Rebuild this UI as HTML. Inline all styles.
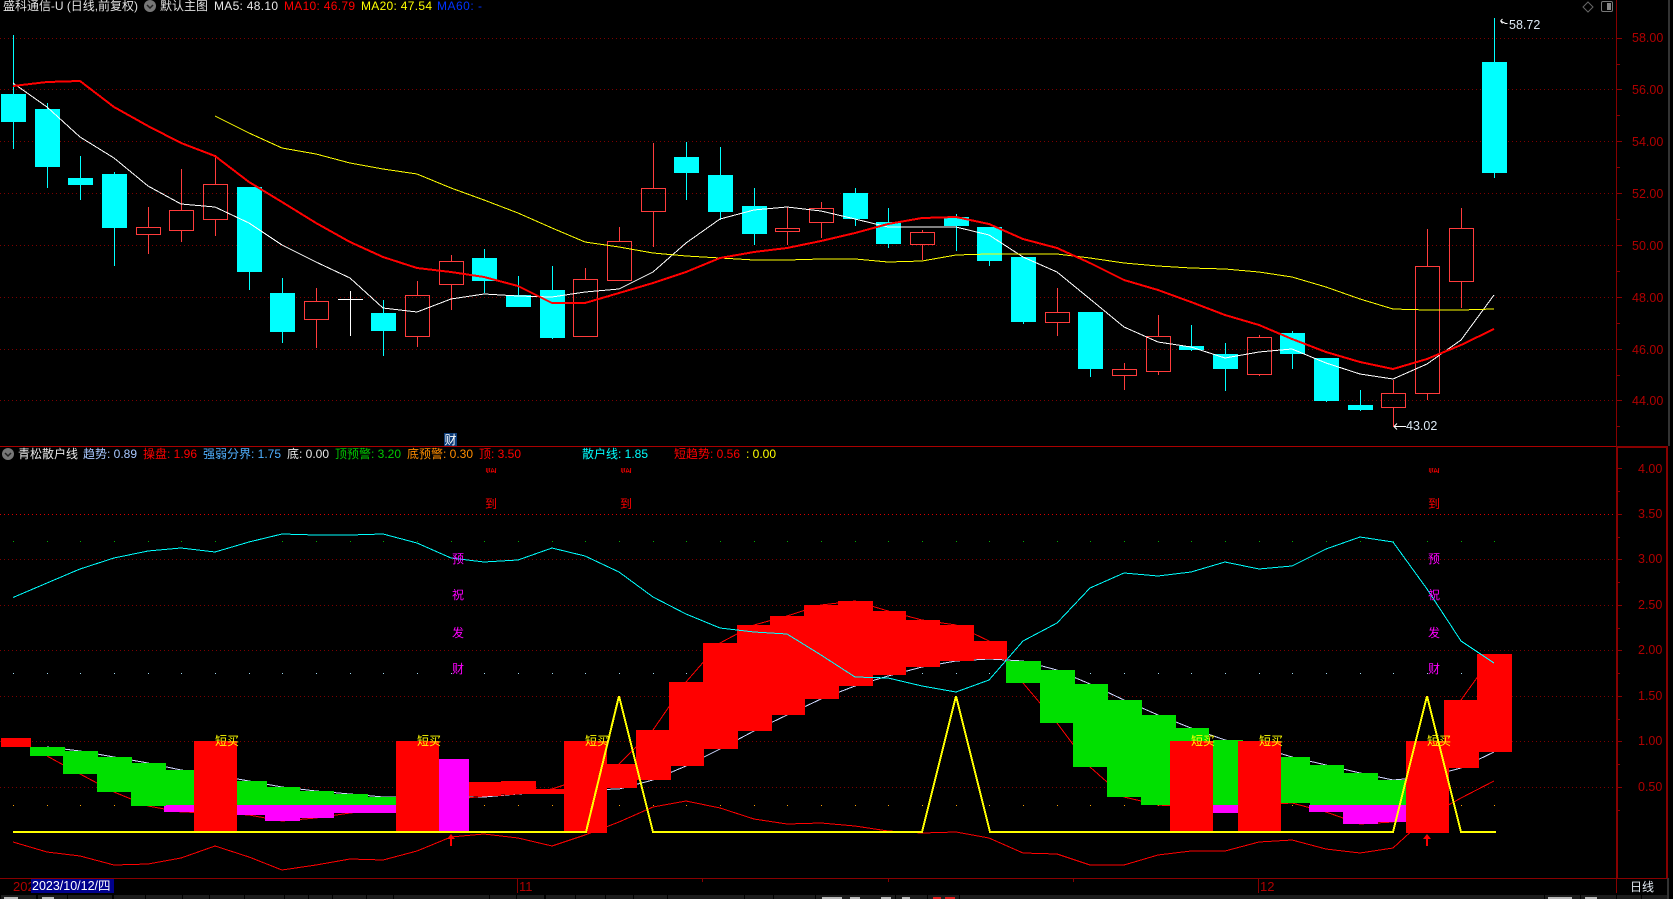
<!DOCTYPE html>
<html lang="zh"><head><meta charset="utf-8"><title>盛科通信-U 日线</title>
<style>
html,body{margin:0;padding:0;background:#000;width:1673px;height:899px;overflow:hidden}
svg{display:block;position:absolute;left:0;top:0}
text{font-family:"Liberation Sans","Noto Sans CJK SC",sans-serif;font-size:12px}
polyline{shape-rendering:crispEdges}
.ax{font-size:12.5px;fill:#b00000}
.m{fill:#ff00ff}
.r{fill:#ff0000}
.y{fill:#ffff00}
</style></head><body>
<svg width="1673" height="899" viewBox="0 0 1673 899" xmlns="http://www.w3.org/2000/svg">
<defs>
<path id="d" d="M13.5 0v1M47.5 0v1M80.5 0v1M114.5 0v1M148.5 0v1M181.5 0v1M215.5 0v1M249.5 0v1M282.5 0v1M316.5 0v1M350.5 0v1M383.5 0v1M417.5 0v1M451.5 0v1M484.5 0v1M518.5 0v1M552.5 0v1M585.5 0v1M619.5 0v1M653.5 0v1M686.5 0v1M720.5 0v1M754.5 0v1M787.5 0v1M821.5 0v1M855.5 0v1M888.5 0v1M922.5 0v1M956.5 0v1M989.5 0v1M1023.5 0v1M1057.5 0v1M1090.5 0v1M1124.5 0v1M1158.5 0v1M1191.5 0v1M1225.5 0v1M1259.5 0v1M1292.5 0v1M1326.5 0v1M1360.5 0v1M1393.5 0v1M1427.5 0v1M1461.5 0v1M1494.5 0v1"/>
<clipPath id="c1"><rect x="0" y="468" width="1600" height="5"/></clipPath>
</defs>

<!-- grid -->
<path shape-rendering="crispEdges" d="M0 38.5H1616M0 89.5H1616M0 141.5H1616M0 193.5H1616M0 245.5H1616M0 297.5H1616M0 349.5H1616M0 400.5H1616M0 559.5H1616M0 605.5H1616M0 650.5H1616M0 696.5H1616M0 741.5H1616M0 787.5H1616" stroke="#7c0000" stroke-width="1" stroke-dasharray="1 3" fill="none"/>
<path shape-rendering="crispEdges" d="M0 514.5H1616" stroke="#d80000" stroke-width="1" stroke-dasharray="1 3" fill="none"/>
<use href="#d" y="541" stroke="#00b000"/>
<use href="#d" y="673" stroke="#a0d8f0"/>
<use href="#d" y="805" stroke="#ffa000"/>

<!-- candles -->
<g shape-rendering="crispEdges">
<path fill="none" stroke="#00ffff" d="M13.5 35V149M47.5 103V188M80.5 156V200M114.5 172V266M249.5 187V290M282.5 278V343M383.5 300V356M484.5 249V293M518.5 276V307M552.5 266V339M686.5 142V200M720.5 147V220M754.5 188V245M855.5 188V226M888.5 208V248M956.5 214V251M989.5 227V266M1023.5 257V324M1090.5 312V377M1191.5 325V351M1225.5 343V391M1292.5 331V369M1326.5 358V402M1360.5 390V411M1494.5 18V178"/>
<path fill="#00ffff" d="M1 94h25V122H1zM35 109h25V167H35zM68 178h25V185H68zM102 174h25V228H102zM237 187h25V272H237zM270 293h25V332H270zM371 313h25V331H371zM472 258h25V281H472zM506 295h25V307H506zM540 290h25V338H540zM674 157h25V173H674zM708 175h25V212H708zM742 206h25V234H742zM843 193h25V219H843zM876 222h25V244H876zM944 217h25V226H944zM977 227h25V261H977zM1011 257h25V322H1011zM1078 312h25V369H1078zM1179 346h25V350H1179zM1213 354h25V369H1213zM1280 333h25V354H1280zM1314 358h25V401H1314zM1348 405h25V410H1348zM1482 62h25V173H1482z"/>
<path fill="none" stroke="#ff3c3c" d="M148.5 207V227M148.5 235V254M181.5 169V210M181.5 231V242M215.5 155V184M215.5 220V236M316.5 288V301M316.5 320V348M417.5 281V295M417.5 337V347M451.5 255V261M451.5 285V310M585.5 268V279M619.5 227V241M653.5 143V188M653.5 212V247M787.5 207V228M787.5 232V245M821.5 202V208M821.5 223V238M922.5 230V232M922.5 245V260M1057.5 288V312M1057.5 323V336M1124.5 363V369M1124.5 376V390M1158.5 315V336M1158.5 372V375M1259.5 335V337M1259.5 375V376M1393.5 380V393M1393.5 408V427M1427.5 229V266M1427.5 394V400M1461.5 208V228M1461.5 282V308"/>
<path fill="none" stroke="#ff3c3c" d="M136.5 227.5h24v7h-24zM169.5 210.5h24v20h-24zM203.5 184.5h24v35h-24zM304.5 301.5h24v18h-24zM405.5 295.5h24v41h-24zM439.5 261.5h24v23h-24zM573.5 279.5h24v57h-24zM607.5 241.5h24v39h-24zM641.5 188.5h24v23h-24zM775.5 228.5h24v3h-24zM809.5 208.5h24v14h-24zM910.5 232.5h24v12h-24zM1045.5 312.5h24v10h-24zM1112.5 369.5h24v6h-24zM1146.5 336.5h24v35h-24zM1247.5 337.5h24v37h-24zM1381.5 393.5h24v14h-24zM1415.5 266.5h24v127h-24zM1449.5 228.5h24v53h-24z"/>
<path fill="none" stroke="#ffffff" d="M350.5 291V336M338 299.5h25"/>
</g>

<!-- MAs -->
<polyline fill="none" stroke="#ffffff" stroke-width="1" points="13,83 47,107 80,137 114,158 148,186 181,204 215,207 249,223 282,245 316,262 350,278 383,308 417,312 451,299 484,294 518,296 552,297 585,292 619,289 653,272 686,243 720,219 754,210 787,207 821,211 855,219 888,227 922,227 956,227 989,235 1023,257 1057,272 1090,299 1124,327 1158,342 1191,347 1225,358 1259,352 1292,349 1326,363 1360,374 1393,379 1427,364 1461,340 1494,295"/>
<polyline fill="none" stroke="#ffff00" stroke-width="1" points="215,116 249,133 282,148 316,154 350,163 383,169 417,174 451,188 484,200 518,213 552,228 585,242 619,247 653,253 686,256 720,258 754,260 787,260 821,259 855,259 888,262 922,261 956,255 989,254 1023,254 1057,254 1090,258 1124,263 1158,266 1191,268 1225,269 1259,272 1292,277 1326,287 1360,299 1393,309 1427,310 1461,310 1494,309"/>
<polyline fill="none" stroke="#ff0000" stroke-width="2" points="13,86 47,82 80,81 114,107 148,126 181,143 215,156 249,182 282,202 316,223 350,242 383,257 417,268 451,272 484,277 518,286 552,303 585,303 619,293 653,283 686,272 720,258 754,252 787,248 821,241 855,233 888,224 922,218 956,217 989,224 1023,239 1057,248 1090,263 1124,280 1158,290 1191,302 1225,315 1259,325 1292,339 1326,352 1360,362 1393,369 1427,359 1461,345 1494,329"/>

<!-- lower lines below blocks -->
<polyline fill="none" stroke="#d0d8ff" stroke-width="1" points="47,747 80,751 114,757 148,763 181,770 215,775 249,781 282,787 316,791 350,794 383,797 417,797 451,797 484,797 518,794 552,792 585,790 619,789 653,780 686,766 720,749 754,731 787,715 821,699 855,686 888,676 922,667 956,661 989,659 1023,661 1057,670 1090,684 1124,700 1158,715 1191,728 1225,740 1259,747 1292,757 1326,765 1360,773 1393,780 1427,777 1461,768 1494,752"/>
<polyline fill="none" stroke="#ff0000" stroke-width="1" points="47,756 80,774 114,792 148,806 181,812 215,813 249,815 282,821 316,818 350,813 383,810 417,805 451,800 484,796 518,794 552,789 585,778 619,764 653,730 686,682 720,643 754,625 787,616 821,605 855,601 888,611 922,620 956,625 989,641 1023,683 1057,723 1090,767 1124,797 1158,805 1191,807 1225,806 1259,805 1292,803 1326,812 1360,824 1393,822 1427,790 1461,700 1494,654"/>
<polyline fill="none" stroke="#ff0000" stroke-width="1" points="13,842 47,852 80,856 114,865 148,864 181,858 215,846 249,857 282,870 316,865 350,859 383,860 417,851 451,837 484,834 518,838 552,846 585,835 619,822 653,807 686,801 720,808 754,819 787,824 821,823 855,826 888,831 922,833 956,832 989,838 1023,853 1057,854 1090,865 1124,865 1158,855 1191,851 1225,851 1259,842 1292,840 1326,849 1360,853 1393,848 1427,817 1461,798 1494,781"/>

<!-- blocks -->
<g shape-rendering="crispEdges">
<path fill="#ff00ff" d="M164 805h30v7h-30zM237 805h28v10h-28zM265 805h35v16h-35zM300 805h34v13h-34zM334 805h62v8h-62zM439 759h30v72h-30zM1213 805h25v8h-25zM1309 805h34v7h-34zM1343 805h35v19h-35zM1378 805h28v17h-28z"/>
<path fill="#00e000" d="M30 747h35v9h-35zM63 751h35v23h-35zM97 757h35v35h-35zM131 763h35v43h-35zM166 770h28v35h-28zM237 781h30v24h-30zM267 787h33v18h-33zM300 791h34v14h-34zM334 794h34v11h-34zM368 797h28v8h-28zM1006 661h35v22h-35zM1040 670h35v53h-35zM1073 684h35v83h-35zM1107 700h35v97h-35zM1141 715h35v90h-35zM1176 728h33v77h-33zM1213 740h30v65h-30zM1281 757h29v46h-29zM1310 765h34v40h-34zM1344 773h34v32h-34zM1378 780h28v25h-28z"/>
<path fill="#ff0000" d="M1 738h30v9H1zM194 741h43v90h-43zM396 741h43v90h-43zM469 782h32v14h-32zM501 781h35v13h-35zM536 789h28v5h-28zM564 741h43v92h-43zM607 764h30v24h-30zM636 730h35v50h-35zM669 682h35v84h-35zM703 643h35v106h-35zM737 625h35v106h-35zM770 616h35v99h-35zM804 605h35v94h-35zM838 601h35v85h-35zM873 611h33v64h-33zM906 620h34v47h-34zM940 625h34v36h-34zM974 641h33v18h-33zM1170 741h43v90h-43zM1238 741h43v90h-43zM1406 741h43v92h-43zM1444 700h35v68h-35zM1477 654h35v98h-35z"/>
</g>

<!-- cyan + yellow -->
<polyline fill="none" stroke="#00ffff" stroke-width="1" points="13,597.5 47,583 80,569 114,558 148,551 181,548 215,552 249,542 282,534 316,535 350,535 383,534 417,543 451,558 484,562 518,560 552,548 585,556 619,572 653,597 686,614 720,628 754,632 787,634 821,655 855,677 888,678 922,686 956,692 989,680 1023,641 1057,623 1090,588 1124,573 1158,576 1191,572 1225,562 1259,569 1292,566 1326,549 1360,537 1393,542 1427,589 1461,641 1494,663"/>
<polyline fill="none" stroke="#ffff00" stroke-width="2" points="13,832 586,832 619,696 653,832 922,832 956,696 990,832 1393,832 1427,696 1461,832 1496,832"/>

<!-- arrows -->
<path fill="#ff0000" d="M451 834l-4 5h3v7h2v-7h3zM1427 834l-4 5h3v7h2v-7h3z"/>

<!-- vertical characters -->
<g clip-path="url(#c1)"><text x="485" y="474" class="r">购</text><text x="620" y="474" class="r">购</text><text x="1428" y="474" class="r">购</text></g>
<text x="485" y="508" class="r">到</text><text x="620" y="508" class="r">到</text><text x="1428" y="508" class="r">到</text>
<text x="452" y="563" class="m">预</text><text x="452" y="599" class="m">祝</text><text x="452" y="637" class="m">发</text><text x="452" y="673" class="m">财</text>
<text x="1428" y="563" class="m">预</text><text x="1428" y="599" class="m">祝</text><text x="1428" y="637" class="m">发</text><text x="1428" y="673" class="m">财</text>
<text x="215" y="745" class="y">短买</text><text x="417" y="745" class="y">短买</text><text x="585" y="745" class="y">短买</text><text x="1191" y="745" class="y">短买</text><text x="1259" y="745" class="y">短买</text><text x="1427" y="745" class="y">短买</text>

<!-- price annotations -->
<path fill="none" stroke="#ffffff" d="M1500.5 21l5 2.5h2M1500.5 21l2-2M1500.5 21l2 2.5"/>
<text x="1509" y="29" fill="#dce8f4" style="font-size:12.5px">58.72</text>
<path fill="none" stroke="#ffffff" d="M1394 426.5h12M1394 426.5l3-3M1394 426.5l3 3"/>
<text x="1406" y="430" fill="#dce8f4" style="font-size:12.5px">43.02</text>

<!-- header -->
<text x="3" y="10" fill="#e0e0e0" textLength="135" lengthAdjust="spacing">盛科通信-U (日线,前复权)</text>
<circle cx="150" cy="6" r="6" fill="#777"/><path d="M147 5l3 3 3-3" fill="none" stroke="#222" stroke-width="1.5"/>
<text x="160" y="10" fill="#e0e0e0">默认主图</text>
<text x="214" y="10" fill="#e8e8e8" textLength="64">MA5: 48.10</text>
<text x="284" y="10" fill="#ff0000" textLength="71">MA10: 46.79</text>
<text x="361" y="10" fill="#ffff00" textLength="71">MA20: 47.54</text>
<text x="437" y="10" fill="#0033ff" textLength="45">MA60: -</text>
<path d="M1588 2l5 5-5 5-5-5z" fill="none" stroke="#666"/>
<rect x="1601.5" y="1.5" width="11" height="10" rx="1.5" fill="none" stroke="#777"/><rect x="1607" y="3" width="4" height="7" fill="#888"/>

<!-- lower header -->
<rect x="444" y="433" width="13" height="13" fill="#0c3c78"/>
<text x="444.5" y="444" fill="#ffffff">财</text>
<circle cx="8" cy="454" r="6" fill="#777"/><path d="M5 453l3 3 3-3" fill="none" stroke="#222" stroke-width="1.5"/>
<text x="18" y="458" fill="#e8e8e8">青松散户线</text>
<text x="83" y="458" fill="#a8c8ff">趋势: 0.89</text>
<text x="143" y="458" fill="#ff0000">操盘: 1.96</text>
<text x="203" y="458" fill="#50b0ff">强弱分界: 1.75</text>
<text x="287" y="458" fill="#e8e8e8">底: 0.00</text>
<text x="335" y="458" fill="#00c800">顶预警: 3.20</text>
<text x="407" y="458" fill="#ff8c00">底预警: 0.30</text>
<text x="479" y="458" fill="#ff0000">顶: 3.50</text>
<text x="582" y="458" fill="#00ffff">散户线: 1.85</text>
<text x="674" y="458" fill="#ff0000">短趋势: 0.56</text>
<text x="746" y="458" fill="#ffff00">: 0.00</text>

<!-- axes -->
<g shape-rendering="crispEdges" fill="none">
<path stroke="#880000" d="M1616.5 0V878M1617 38.5h5M1617 64.5h3M1617 89.5h5M1617 115.5h3M1617 141.5h5M1617 167.5h3M1617 193.5h5M1617 219.5h3M1617 245.5h5M1617 271.5h3M1617 297.5h5M1617 323.5h3M1617 349.5h5M1617 375.5h3M1617 400.5h5M1617 426.5h3"/>
<path stroke="#880000" d="M1617 468.5h5M1617 491.5h3M1617 514.5h5M1617 537.5h3M1617 559.5h5M1617 582.5h3M1617 605.5h5M1617 628.5h3M1617 650.5h5M1617 673.5h3M1617 696.5h5M1617 719.5h3M1617 741.5h5M1617 764.5h3M1617 787.5h5M1617 810.5h3"/>
<path stroke="#aa0000" d="M0 446.5H1616"/>
<path stroke="#880000" stroke-width="2" d="M1616 447H1668M1667 447V878M1617 447V878"/>
<path stroke="#880000" d="M0 878.5H1668"/>
<path stroke="#880000" d="M517.5 879V893M1258.5 879V893M1616.5 879V893M702.5 879v3M888.5 879v3M1073.5 879v3"/>
<path stroke="#333333" stroke-width="2" d="M1669 0V446M1668 878V899"/>
</g>
<text x="1632" y="42" class="ax">58.00</text><text x="1632" y="94" class="ax">56.00</text><text x="1632" y="146" class="ax">54.00</text><text x="1632" y="198" class="ax">52.00</text><text x="1632" y="250" class="ax">50.00</text><text x="1632" y="302" class="ax">48.00</text><text x="1632" y="354" class="ax">46.00</text><text x="1632" y="405" class="ax">44.00</text>
<text x="1638" y="473" class="ax">4.00</text><text x="1638" y="518" class="ax">3.50</text><text x="1638" y="563" class="ax">3.00</text><text x="1638" y="609" class="ax">2.50</text><text x="1638" y="654" class="ax">2.00</text><text x="1638" y="700" class="ax">1.50</text><text x="1638" y="745" class="ax">1.00</text><text x="1638" y="791" class="ax">0.50</text>

<!-- time axis -->
<text x="13" y="891" fill="#b00000" style="font-size:13px">2023</text>
<rect x="31" y="879" width="83" height="14" fill="#00008c"/>
<text x="32" y="890" fill="#ffffff" style="font-size:12.5px">2023/10/12/四</text>
<text x="519" y="891" fill="#b00000" style="font-size:13px">11</text>
<text x="1260" y="891" fill="#b00000" style="font-size:13px">12</text>
<text x="1630" y="891" fill="#e0e8f0">日线</text>

<!-- bottom tabs -->
<path fill="#1c1c1c" shape-rendering="crispEdges" d="M1 895h35v4H1zM38 895h29v4H38zM68 895h44v4H68zM114 895h31v4h-31zM146 895h36v4h-36zM183 895h26v4h-26zM210 895h34v4h-34zM245 895h39v4h-39zM285 895h23v4h-23zM309 895h23v4h-23zM333 895h33v4h-33zM367 895h26v4h-26zM394 895h35v4h-35zM429 895h60v4h-60zM490 895h26v4h-26zM517 895h27v4h-27zM546 895h29v4h-29zM576 895h29v4h-29zM606 895h27v4h-27zM634 895h33v4h-33zM668 895h39v4h-39zM707 895h37v4h-37zM745 895h28v4h-28zM774 895h41v4h-41zM816 895h79v4h-79zM896 895h31v4h-31zM928 895h31v4h-31zM960 895h513v4H960zM1545 895h35v4h-35zM1581 895h35v4h-35zM1617 895h24v4h-24zM1642 895h25v4h-25zM1473 895h71v4h-71z"/>
<path fill="#b8b8b8" shape-rendering="crispEdges" d="M4 897h14v2H4zM42 897h12v2H42zM822 897h20v2h-20zM850 897h10v2h-10zM881 897h10v2h-10zM902 897h8v2h-8zM1548 897h24v2h-24zM1585 897h12v2h-12z"/>
<path fill="#e02020" shape-rendering="crispEdges" d="M933 897h8v2h-8zM945 897h10v2h-10z"/>
</svg>
</body></html>
